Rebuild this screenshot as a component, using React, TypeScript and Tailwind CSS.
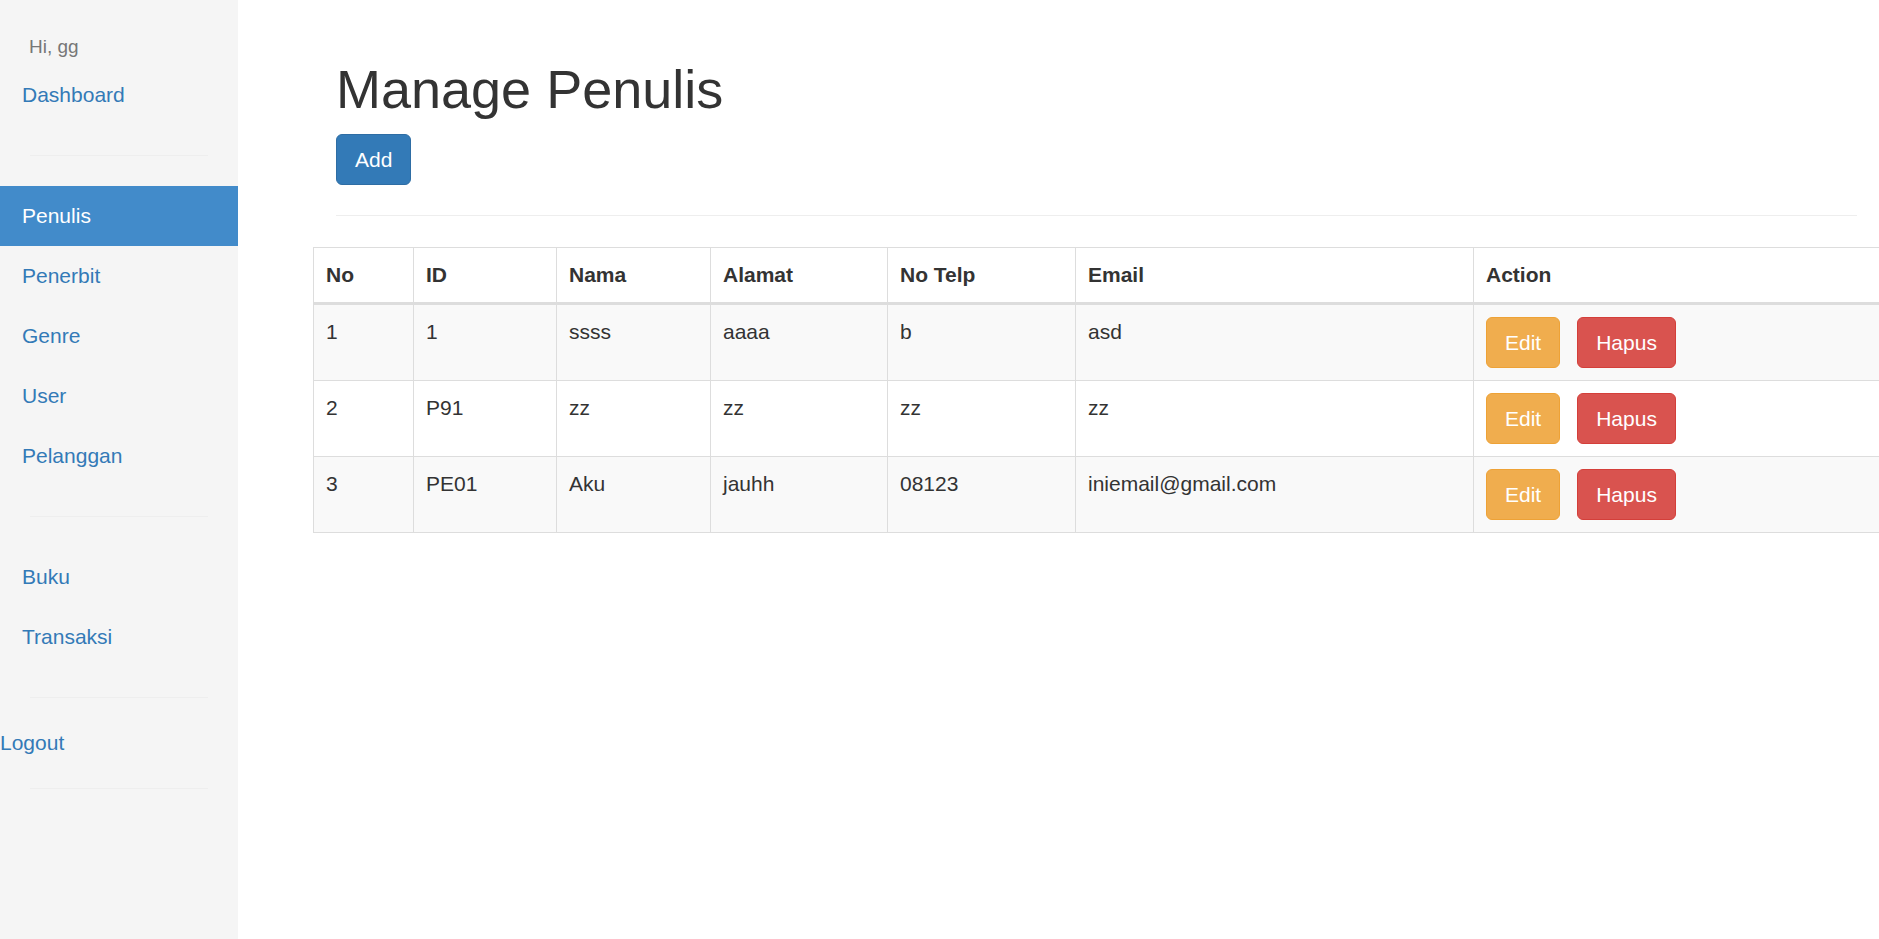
const menuTop = ["Dashboard"];
const menuMid = ["Penulis", "Penerbit", "Genre", "User", "Pelanggan"];
const menuBottom = ["Buku", "Transaksi"];

const rows = [
  { no: "1", id: "1", nama: "ssss", alamat: "aaaa", telp: "b", email: "asd" },
  { no: "2", id: "P91", nama: "zz", alamat: "zz", telp: "zz", email: "zz" },
  { no: "3", id: "PE01", nama: "Aku", alamat: "jauhh", telp: "08123", email: "iniemail@gmail.com" },
];

const cols = [
  { label: "No", w: "w-[100px]" },
  { label: "ID", w: "w-[143px]" },
  { label: "Nama", w: "w-[154px]" },
  { label: "Alamat", w: "w-[177px]" },
  { label: "No Telp", w: "w-[188px]" },
  { label: "Email", w: "w-[398px]" },
  { label: "Action", w: "w-[406px]" },
];

const Divider = () => <div className="mx-[30px] my-[30px] h-px bg-[#eeeeee]" />;

const NavItem = ({ label, active }: { label: string; active?: boolean }) => (
  <a
    href="#"
    className={
      active
        ? "block h-[60px] pl-[22px] py-[15px] leading-[30px] bg-[#428bca] text-white"
        : "block h-[60px] pl-[22px] py-[15px] leading-[30px] text-[#337ab7]"
    }
  >
    {label}
  </a>
);

const Sidebar = () => (
  <aside className="w-[238px] shrink-0 bg-[#f5f5f5] min-h-[939px]">
    <div className="pt-[34px] pl-[29px] mb-[6px] text-[19px] leading-[25px] text-[#777777]">Hi, gg</div>
    {menuTop.map((m) => (
      <NavItem key={m} label={m} />
    ))}
    <Divider />
    {menuMid.map((m) => (
      <NavItem key={m} label={m} active={m === "Penulis"} />
    ))}
    <Divider />
    {menuBottom.map((m) => (
      <NavItem key={m} label={m} />
    ))}
    <Divider />
    <a href="#" className="block leading-[30px] text-[#337ab7]">
      Logout
    </a>
    <Divider />
  </aside>
);

const Btn = ({ label, kind }: { label: string; kind: "edit" | "hapus" }) => (
  <button
    className={
      kind === "edit"
        ? "h-[51px] px-[18px] rounded-[6px] border border-[#eea236] bg-[#f0ad4e] text-white leading-[30px]"
        : "h-[51px] px-[18px] rounded-[6px] border border-[#d43f3a] bg-[#d9534f] text-white leading-[30px]"
    }
  >
    {label}
  </button>
);

export default function App() {
  return (
    <div className="flex min-h-[939px] bg-white text-[21px] text-[#333333] font-['Liberation_Sans',Arial,sans-serif]">
      <Sidebar />
      <main className="flex-1">
        <div className="pl-[98px] pr-[23px] pt-[60px]">
          <h1 className="text-[54px] leading-[59px] mb-[15px]">Manage Penulis</h1>
          <button className="h-[51px] px-[18px] rounded-[6px] border border-[#2e6da4] bg-[#337ab7] text-white leading-[30px]">
            Add
          </button>
          <div className="mt-[30px] mb-[31px] h-px bg-[#eeeeee]" />
        </div>
        <table className="ml-[75px] w-[1566px] border-collapse border border-[#dddddd] table-fixed">
          <thead>
            <tr>
              {cols.map((c) => (
                <th
                  key={c.label}
                  className={`${c.w} border border-[#dddddd] border-b-[3px] p-[12px] text-left font-bold leading-[30px] align-bottom`}
                >
                  {c.label}
                </th>
              ))}
            </tr>
          </thead>
          <tbody>
            {rows.map((r, i) => (
              <tr key={r.no} className={i % 2 === 0 ? "bg-[#f9f9f9]" : "bg-white"}>
                {[r.no, r.id, r.nama, r.alamat, r.telp, r.email].map((v, j) => (
                  <td key={j} className="border border-[#dddddd] p-[12px] leading-[30px] align-top">
                    {v}
                  </td>
                ))}
                <td className="border border-[#dddddd] p-[12px] align-top">
                  <div className="flex gap-[17px]">
                    <Btn label="Edit" kind="edit" />
                    <Btn label="Hapus" kind="hapus" />
                  </div>
                </td>
              </tr>
            ))}
          </tbody>
        </table>
      </main>
    </div>
  );
}
